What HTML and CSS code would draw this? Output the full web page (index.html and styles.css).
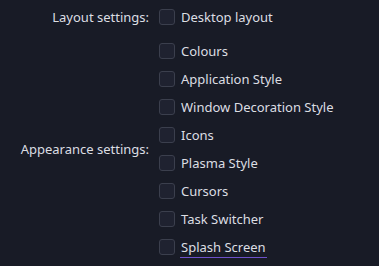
FILE: index.html
```html
<!DOCTYPE html>
<html>
<head>
<meta charset="utf-8">
<link rel="stylesheet" href="styles.css">
</head>
<body>
<div class="form">
  <div class="label">Layout settings:</div>
  <div class="group">
    <label class="opt"><span class="box"></span><span class="text">Desktop layout</span></label>
  </div>
  <div class="label">Appearance settings:</div>
  <div class="group">
    <label class="opt"><span class="box"></span><span class="text">Colours</span></label>
    <label class="opt"><span class="box"></span><span class="text">Application Style</span></label>
    <label class="opt"><span class="box"></span><span class="text">Window Decoration Style</span></label>
    <label class="opt"><span class="box"></span><span class="text">Icons</span></label>
    <label class="opt"><span class="box"></span><span class="text">Plasma Style</span></label>
    <label class="opt"><span class="box"></span><span class="text">Cursors</span></label>
    <label class="opt"><span class="box"></span><span class="text">Task Switcher</span></label>
    <label class="opt"><span class="box"></span><span class="text focus">Splash Screen</span></label>
  </div>
</div>
</body>
</html>
```
FILE: styles.css
```css
html, body {
  margin: 0;
  background: #181b26;
  height: 100%;
}
body {
  font-family: "Noto Sans", "DejaVu Sans", sans-serif;
  font-size: 13px;
  color: #dcdee3;
}
.form {
  display: grid;
  grid-template-columns: 149px auto;
  column-gap: 10px;
  row-gap: 6px;
  padding-top: 3px;
}
.label {
  text-align: right;
  align-self: center;
}
.group {
  display: flex;
  flex-direction: column;
}
.opt {
  display: flex;
  align-items: center;
  height: 28px;
}
.box {
  width: 14px;
  height: 14px;
  border: 1px solid #3b3f4d;
  border-radius: 3px;
  background: #1f2230;
  margin-right: 6px;
  flex: none;
}
.text {
  line-height: 18px;
}
.focus {
  border-bottom: 1px solid #6d50c8;
  padding: 0 1px 1px;
  margin-left: -1px;
  margin-top: 2px;
}
```
